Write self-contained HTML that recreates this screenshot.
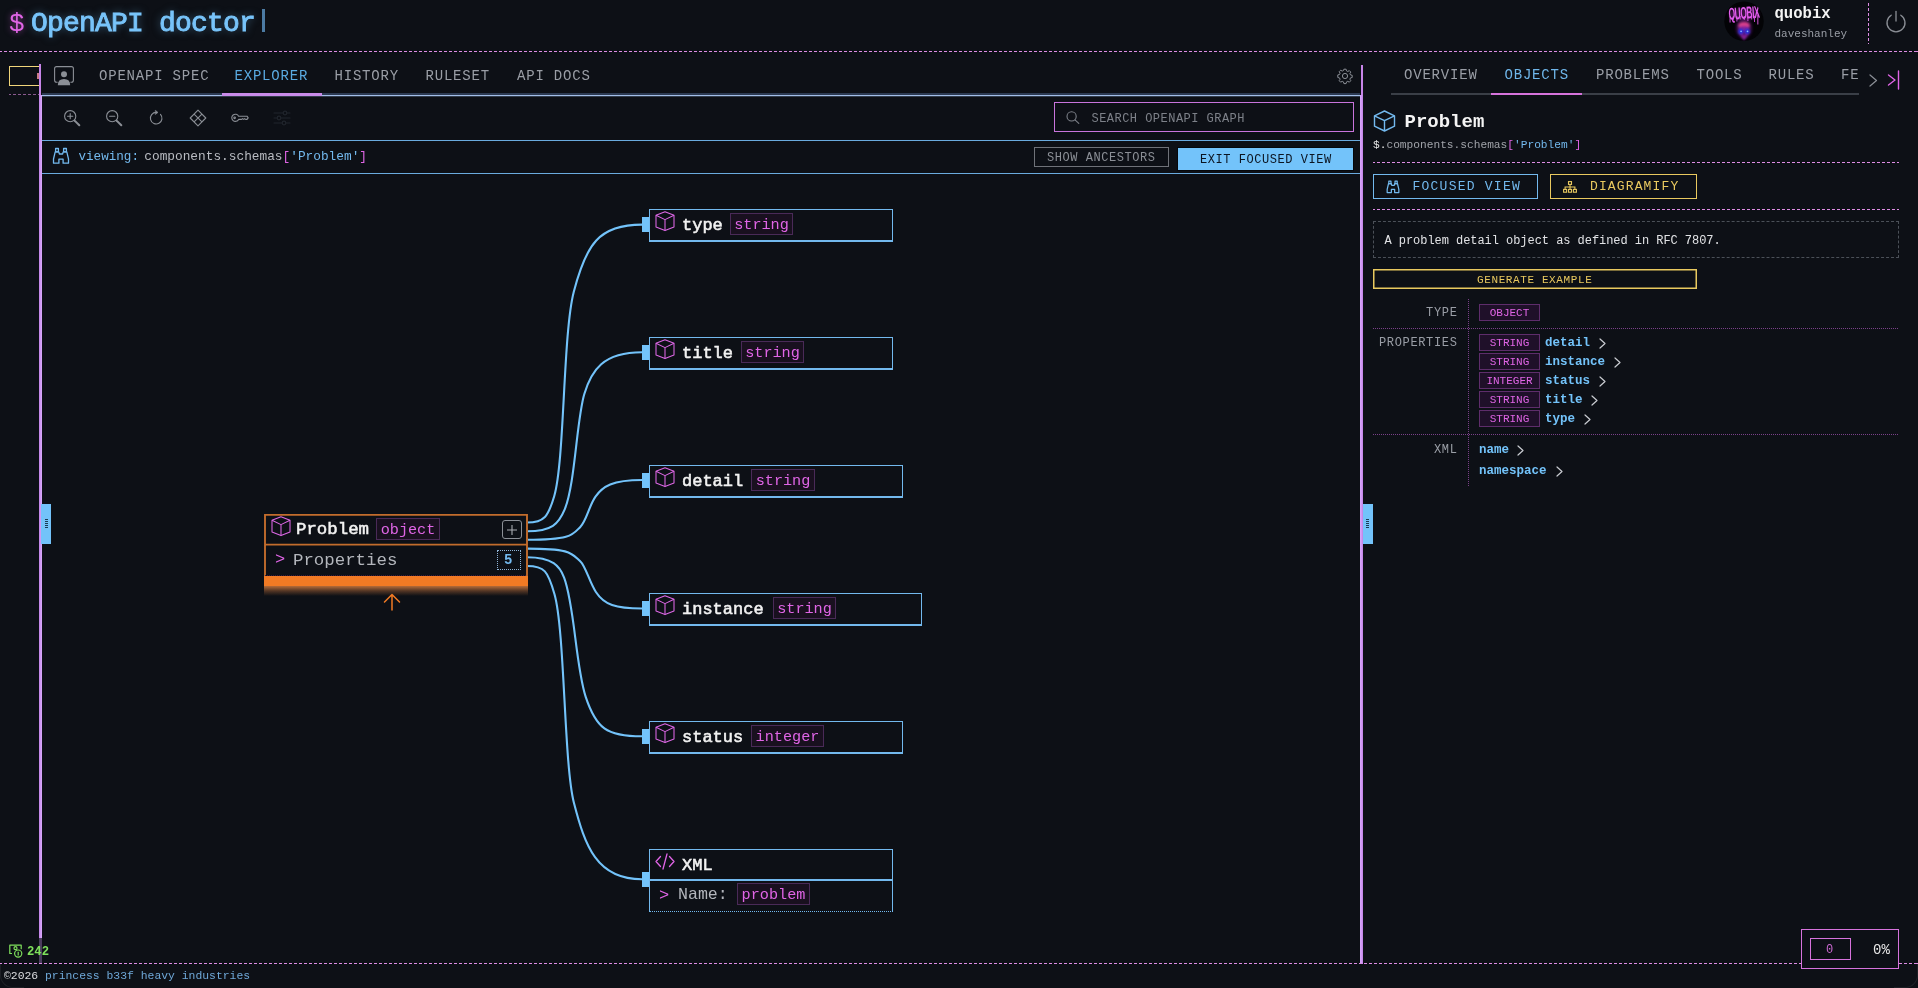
<!DOCTYPE html>
<html>
<head>
<meta charset="utf-8">
<title>OpenAPI doctor</title>
<style>
html,body{margin:0;padding:0;}
body{width:1918px;height:988px;overflow:hidden;background:#0d1016;font-family:"Liberation Mono",monospace;color:#e6e6e6;position:relative;}
.a{position:absolute;white-space:pre;line-height:1;}
.b{position:absolute;box-sizing:border-box;}
.hd{position:absolute;height:1px;background:repeating-linear-gradient(90deg,#dd8ce3 0,#dd8ce3 3px,transparent 3px,transparent 5px);background-position:-1px 0;}
.vd{position:absolute;width:1px;background:repeating-linear-gradient(180deg,#dd8ce3 0,#dd8ce3 3px,transparent 3px,transparent 5px);}
.tab{position:absolute;white-space:pre;line-height:1;font-size:14px;letter-spacing:0.8px;color:#9a9ea6;top:69px;}
.pill{position:absolute;box-sizing:border-box;border:1px solid #5e2d6b;background:#1f1029;color:#e065e6;font-size:11px;line-height:16px;height:17px;text-align:center;white-space:pre;}
.pn{position:absolute;white-space:pre;line-height:1;margin-top:.7px;font-size:12.5px;font-weight:bold;color:#73c3fa;}
.lbl{position:absolute;white-space:pre;line-height:1;font-size:12px;letter-spacing:0.65px;margin-top:1px;color:#9a9ea6;text-align:right;}
.node{position:absolute;box-sizing:border-box;border:1px solid #73b9ee;border-bottom-width:2px;background:#0d1016;}
.nl{position:absolute;white-space:pre;line-height:1;font-size:17px;font-weight:normal;-webkit-text-stroke:.55px #f2f2f2;color:#f2f2f2;}
.np{position:absolute;box-sizing:border-box;border:1px solid #4a2a58;background:#19101f;color:#e065e6;font-size:15.2px;line-height:20px;height:22px;padding-top:1px;white-space:pre;text-align:center;}
.hn{position:absolute;width:7px;height:15px;background:#73c3fa;}
svg{position:absolute;overflow:visible;}
</style>
</head>
<body>
<div id="root" style="position:absolute;left:0;top:0;width:1918px;height:988px;will-change:transform;transform:translateZ(0);">

<!-- ===== HEADER ===== -->
<div class="a" style="left:9px;top:11px;font-size:26px;color:#e065e6;text-shadow:0 0 6px rgba(224,101,230,.5);">$</div>
<div class="a" id="title" style="left:31px;top:10px;font-size:28px;font-weight:normal;-webkit-text-stroke:.9px #78c4fa;letter-spacing:-0.8px;color:#78c4fa;text-shadow:0 0 8px rgba(115,195,250,.5);">OpenAPI doctor</div>
<div class="b" style="left:262px;top:9px;width:3px;height:23px;background:#4c7ba3;"></div>

<!-- avatar -->
<svg style="left:1724px;top:1px;" width="40" height="41" viewBox="0 0 40 41">
  <defs>
    <filter id="b1" x="-30%" y="-30%" width="160%" height="160%"><feGaussianBlur stdDeviation="0.45"/></filter>
    <filter id="b2" x="-50%" y="-50%" width="200%" height="200%"><feGaussianBlur stdDeviation="1.6"/></filter>
    <filter id="b3" x="-50%" y="-50%" width="200%" height="200%"><feGaussianBlur stdDeviation="0.8"/></filter>
    <clipPath id="cc"><circle cx="20" cy="20.300" r="19.700"/></clipPath>
  </defs>
  <circle cx="20" cy="20.300" r="19.700" fill="#030306"/>
  <g clip-path="url(#cc)">
    <ellipse cx="20" cy="27" rx="8" ry="10" fill="#7a1f8e" opacity=".5" filter="url(#b2)"/>
    <ellipse cx="20" cy="13" rx="15" ry="6" fill="#a030b0" opacity=".35" filter="url(#b2)"/>
    <g filter="url(#b1)" fill="#e45cee">
      <g transform="translate(20.300,17.800) rotate(-4) scale(.8,1.620)"><text x="0" y="0" text-anchor="middle" font-family="Liberation Sans, sans-serif" font-weight="bold" font-size="10.500" letter-spacing="-.5">QUOBIX</text></g>
      <rect x="5.600" y="15" width=".9" height="6.500"/><rect x="8.800" y="15" width=".8" height="4"/><rect x="12.500" y="15" width=".8" height="5.500"/><rect x="15.800" y="15" width=".8" height="3.500"/><rect x="19.800" y="15" width=".8" height="4"/><rect x="23.500" y="15" width=".8" height="5"/><rect x="27.300" y="15" width=".8" height="3.500"/><rect x="30.200" y="15" width=".8" height="6"/><rect x="33.400" y="14" width=".9" height="9.500"/>
    </g>
    <g filter="url(#b3)">
      <ellipse cx="20" cy="24.500" rx="5.800" ry="3.600" fill="#d8408c"/>
      <path d="M14.600 26Q20 24 25.400 26L24.600 32 22.300 36.500 20 39.500 17.700 36.500 15.400 32z" fill="#86249a"/>
      <path d="M18.600 33L20 30 21.400 33 20 35z" fill="#3a0a4a"/>
    </g>
    <circle cx="16.900" cy="30.400" r="2.600" fill="#1a2fe0" filter="url(#b3)"/>
    <circle cx="23.300" cy="30.400" r="2.600" fill="#1a2fe0" filter="url(#b3)"/>
    <circle cx="17.100" cy="30.300" r=".9" fill="#8fb0ff" filter="url(#b1)"/>
    <circle cx="23.500" cy="30.300" r=".9" fill="#8fb0ff" filter="url(#b1)"/>
  </g>
</svg>
<div class="a" style="left:1774.500px;top:7px;font-size:15.6px;font-weight:bold;color:#f4f4f4;">quobix</div>
<div class="a" style="left:1774.500px;top:29px;font-size:11px;color:#9a9ea6;">daveshanley</div>
<div class="vd" style="left:1868px;top:3px;height:41px;"></div>
<svg style="left:1885px;top:10px;" width="22" height="24" viewBox="0 0 22 24" fill="none" stroke="#8b8f96" stroke-width="1.300" stroke-linecap="round">
  <path d="M11 1.5 V11"/>
  <path d="M6.2 5.2 A9 9 0 1 0 15.8 5.2"/>
</svg>

<!-- top dashed line -->
<div class="hd" style="left:0;top:51px;width:1918px;"></div>

<!-- ===== LEFT RAIL ===== -->
<div class="b" style="left:9px;top:66px;width:31px;height:20px;border:1px solid #f0d57a;"></div>
<div class="b" style="left:37px;top:73px;width:2px;height:6px;background:#c97a86;"></div>
<div class="hd" style="left:9px;top:94px;width:31px;opacity:.6;"></div>

<!-- vertical splitters -->
<div class="b" style="left:39px;top:64px;width:2px;height:31px;background:#c785e8;"></div>
<div class="b" style="left:39px;top:95px;width:3px;height:843px;background:linear-gradient(90deg,#c080e4 0,#cf98f4 1.500px,#d9abfa 3px);"></div>
<div class="b" style="left:39px;top:938px;width:3px;height:25px;background:#4b3c5e;"></div>
<div class="b" style="left:41px;top:504px;width:10px;height:40px;background:#73c3fa;"></div>
<div class="b" style="left:45px;top:519px;width:3px;height:9px;background:repeating-linear-gradient(180deg,#0b2438 0,#0b2438 1px,transparent 1px,transparent 2px);opacity:.85;"></div>
<div class="b" style="left:1361px;top:65px;width:2px;height:30px;background:#c785e8;"></div>
<div class="b" style="left:1360px;top:95px;width:3px;height:869px;background:linear-gradient(90deg,#d9abfa 0,#cf98f4 1.500px,#c080e4 3px);"></div>
<div class="b" style="left:1363px;top:504px;width:10px;height:40px;background:#73c3fa;"></div>
<div class="b" style="left:1366px;top:519px;width:3px;height:9px;background:repeating-linear-gradient(180deg,#0b2438 0,#0b2438 1px,transparent 1px,transparent 2px);opacity:.85;"></div>

<!-- ===== LEFT TABS ===== -->
<div class="tab" style="left:99px;">OPENAPI SPEC</div>
<div class="tab" style="left:234.5px;color:#5aaae1;">EXPLORER</div>
<div class="tab" style="left:334.5px;">HISTORY</div>
<div class="tab" style="left:425.5px;">RULESET</div>
<div class="tab" style="left:517px;">API DOCS</div>
<div class="b" style="left:42px;top:93px;width:1318px;height:2px;background:#2c3a52;"></div>
<div class="b" style="left:42px;top:95px;width:1318px;height:2px;background:linear-gradient(180deg,#a3bfe8 0,#a3bfe8 1px,rgba(163,191,232,.25) 1px);"></div>
<div class="b" style="left:222px;top:93px;width:100px;height:3px;background:#c98be9;"></div>
<svg style="left:54px;top:66px;" width="20" height="20" viewBox="0 0 20 20" fill="none" stroke="#8b8f96" stroke-width="1.100"><path d="M3.600 16.300H2.600Q.6 16.300 .6 14.300V2.600Q.6 .6 2.600 .6H17.400Q19.400 .6 19.400 2.600V14.300Q19.400 16.300 17.400 16.300H16.400"/><circle cx="10" cy="8.200" r="3" fill="#8b8f96" stroke="none"/><path d="M3.800 19.200Q3.800 13 10 13T16.200 19.200z" fill="#8b8f96" stroke="none"/></svg>

<!-- ===== LEFT PANEL: toolbar ===== -->
<div class="b" style="left:42px;top:140px;width:1318px;height:1px;background:#6aabdf;"></div>
<div class="b" style="left:42px;top:173px;width:1318px;height:1px;background:#6aabdf;"></div>

<!-- gear -->
<svg style="left:1337px;top:68px;" width="16" height="16" viewBox="0 0 16 16" fill="none" stroke="#8b8f96" stroke-width="1">
  <circle cx="8" cy="8" r="2.6"/>
  <path d="M6.9 1.2h2.2l.4 1.7 1.3.6 1.5-.9 1.5 1.5-.9 1.5.6 1.3 1.7.4v2.2l-1.7.4-.6 1.3.9 1.5-1.5 1.5-1.5-.9-1.3.6-.4 1.7H6.900l-.4-1.700-1.300-.6-1.500.9-1.500-1.500.9-1.500-.6-1.300-1.700-.4V6.900l1.700-.4.6-1.300-.9-1.500 1.500-1.500 1.500.9 1.300-.6z" stroke-linejoin="round"/>
</svg>

<!-- zoom in -->
<svg style="left:63px;top:109px;" width="18" height="18" viewBox="0 0 18 18" fill="none" stroke="#8b8f96" stroke-width="1.1" stroke-linecap="round">
  <circle cx="7.2" cy="7.2" r="5.6"/><path d="M4.600 7.200h5.200M7.200 4.600v5.200"/><path d="M11.600 11.600L16.300 16.300" stroke-width="2"/>
</svg>
<!-- zoom out -->
<svg style="left:105px;top:109px;" width="18" height="18" viewBox="0 0 18 18" fill="none" stroke="#8b8f96" stroke-width="1.1" stroke-linecap="round">
  <circle cx="7.2" cy="7.2" r="5.6"/><path d="M4.600 7.200h5.200"/><path d="M11.600 11.600L16.300 16.300" stroke-width="2"/>
</svg>
<!-- rotate -->
<svg style="left:149px;top:110px;" width="15" height="16" viewBox="0 0 15 16" fill="none" stroke="#8b8f96" stroke-width="1.100" stroke-linecap="round" stroke-linejoin="round">
  <path d="M11.500 4.300A5.800 5.800 0 1 1 7.200 2.400"/><path d="M6.600 .5L9 2.400 6.600 4.300z" fill="#8b8f96" stroke-width=".6"/>
</svg>
<!-- diamond grid -->
<svg style="left:189px;top:109px;" width="18" height="18" viewBox="0 0 18 18" fill="none" stroke="#8b8f96" stroke-width="1.1" stroke-linejoin="round">
  <path d="M9 1.200L16.800 9 9 16.800 1.200 9z"/><path d="M5.100 5.100l7.800 7.800M12.900 5.100l-7.800 7.800"/>
</svg>
<!-- key -->
<svg style="left:231px;top:112px;" width="18" height="12" viewBox="0 0 18 12" fill="none" stroke="#8b8f96" stroke-width="1.1" stroke-linecap="round" stroke-linejoin="round">
  <path d="M7.600 4.200H16l1.200 1.600L16 7.400h-1.400l-1-.8-1 .8-1-.8-1 .8H7.600A3.600 3.600 0 1 1 7.600 4.200z"/><circle cx="3.600" cy="5.800" r=".8"/>
</svg>
<!-- sliders (dim) -->
<svg style="left:273px;top:110px;" width="18" height="16" viewBox="0 0 18 16" fill="none" stroke="#20252c" stroke-width="1.2" stroke-linecap="round">
  <path d="M1 3h16M1 8h16M1 13h16"/><circle cx="12" cy="3" r="1.800" fill="#0d1016"/><circle cx="6" cy="8" r="1.800" fill="#0d1016"/><circle cx="11" cy="13" r="1.800" fill="#0d1016"/>
</svg>

<!-- search box -->
<div class="b" style="left:1054px;top:102px;width:300px;height:30px;border:1px solid #c874dc;"></div>
<svg style="left:1066px;top:111px;" width="14" height="13" viewBox="0 0 14 13" fill="none" stroke="#7d8189" stroke-width="1.1" stroke-linecap="round">
  <circle cx="5.600" cy="5.400" r="4.600"/><path d="M9 8.800L12.800 12.300"/>
</svg>
<div class="a" style="left:1091.5px;top:113px;font-size:12px;letter-spacing:0.47px;color:#7d8189;">SEARCH OPENAPI GRAPH</div>

<!-- viewing row -->
<svg style="left:52px;top:147px;" width="18" height="18" viewBox="0 0 18 18" fill="none" stroke="#73b9ee" stroke-width="1.300" stroke-linejoin="round">
  <path d="M3.600 1.500h2.800v3.300H3.600z"/><path d="M11.600 1.500h2.800v3.300h-2.800z"/>
  <path d="M3.200 4.800h3.600l.6 2.200h3.200l.6-2.200h3.600l1.700 7.200v4.200h-5.400v-4h-4.200v4H1.500v-4.200z"/>
</svg>
<div class="a" style="left:78.500px;top:151px;font-size:12.600px;color:#73b9ee;">viewing:</div>
<div class="a" style="left:144.300px;top:151px;font-size:12.800px;color:#b9bcc2;">components.schemas<span style="color:#e065e6">[</span><span style="color:#73b9ee">'Problem'</span><span style="color:#e065e6">]</span></div>

<!-- buttons -->
<div class="b" style="left:1034px;top:147px;width:135px;height:20px;border:1px solid #6f7279;"></div>
<div class="a" style="left:1047px;top:152px;font-size:12px;letter-spacing:0.550px;color:#8b8f96;">SHOW ANCESTORS</div>
<div class="b" style="left:1178px;top:148px;width:175px;height:22px;background:#73c3fa;box-shadow:0 0 0 1px #05080c;"></div>
<div class="a" style="left:1200px;top:154px;font-size:12px;letter-spacing:0.550px;color:#0b1420;">EXIT FOCUSED VIEW</div>


<!-- ===== GRAPH ===== -->
<svg style="left:0;top:0;" width="1360" height="964" viewBox="0 0 1360 964" fill="none" stroke="#73c3fa" stroke-width="2.100">
<path d="M527.0 522.5C544.4 522.5 548.2 516.5 554.2 496.2C564.8 460.4 562.8 333.7 573.8 291.7C586.2 244.4 598.6 224.6 642.0 224.6"/>
<path d="M527.0 531.2C551.9 531.2 558.6 524.0 564.7 509.3C575.2 484.1 576.6 418.8 584.4 393.7C591.6 370.5 602.8 352.3 642.0 352.3"/>
<path d="M527.0 539.8C573.2 539.8 573.0 534.0 580.3 526.9C586.6 520.8 588.8 506.3 595.5 496.7C602.5 486.6 612.2 480.0 642.0 480.0"/>
<path d="M527.0 548.6C571.5 548.6 571.6 553.4 580.2 561.2C585.7 566.1 589.3 581.9 595.9 592.0C604.2 604.8 615.4 608.5 642.0 608.5"/>
<path d="M527.0 557.2C552.8 557.2 559.9 566.3 564.1 577.6C574.6 605.2 575.6 665.9 585.7 696.8C596.1 728.2 606.4 736.3 642.0 736.3"/>
<path d="M527.0 566.0C544.5 566.0 547.9 570.9 554.5 594.2C564.9 630.6 563.9 764.1 573.9 802.7C585.0 845.7 596.5 879.2 642.0 879.2"/>
</svg>
<div class="node" style="left:649px;top:209px;width:244px;height:33px;"></div>
<div class="hn" style="left:642px;top:217px;"></div>
<svg style="left:655px;top:211px;" width="20" height="20" viewBox="0 0 20 20" fill="none" stroke="#de68e6" stroke-width="1.050" stroke-linejoin="round"><path d="M10 .8L19 4.300V16.100L10 19.600 1 16.100V4.300z"/><path d="M1 4.300L10 8.600 19 4.300M10 8.600V19.600"/></svg>
<div class="nl" style="left:682px;top:217px;">type</div>
<div class="np" style="left:730px;top:213px;width:63px;">string</div>
<div class="node" style="left:649px;top:337px;width:244px;height:33px;"></div>
<div class="hn" style="left:642px;top:345px;"></div>
<svg style="left:655px;top:339px;" width="20" height="20" viewBox="0 0 20 20" fill="none" stroke="#de68e6" stroke-width="1.050" stroke-linejoin="round"><path d="M10 .8L19 4.300V16.100L10 19.600 1 16.100V4.300z"/><path d="M1 4.300L10 8.600 19 4.300M10 8.600V19.600"/></svg>
<div class="nl" style="left:682px;top:345px;">title</div>
<div class="np" style="left:741px;top:341px;width:63px;">string</div>
<div class="node" style="left:649px;top:465px;width:254px;height:33px;"></div>
<div class="hn" style="left:642px;top:473px;"></div>
<svg style="left:655px;top:467px;" width="20" height="20" viewBox="0 0 20 20" fill="none" stroke="#de68e6" stroke-width="1.050" stroke-linejoin="round"><path d="M10 .8L19 4.300V16.100L10 19.600 1 16.100V4.300z"/><path d="M1 4.300L10 8.600 19 4.300M10 8.600V19.600"/></svg>
<div class="nl" style="left:682px;top:473px;">detail</div>
<div class="np" style="left:751px;top:469px;width:64px;">string</div>
<div class="node" style="left:649px;top:593px;width:273px;height:33px;"></div>
<div class="hn" style="left:642px;top:601px;"></div>
<svg style="left:655px;top:595px;" width="20" height="20" viewBox="0 0 20 20" fill="none" stroke="#de68e6" stroke-width="1.050" stroke-linejoin="round"><path d="M10 .8L19 4.300V16.100L10 19.600 1 16.100V4.300z"/><path d="M1 4.300L10 8.600 19 4.300M10 8.600V19.600"/></svg>
<div class="nl" style="left:682px;top:601px;">instance</div>
<div class="np" style="left:773px;top:597px;width:63px;">string</div>
<div class="node" style="left:649px;top:721px;width:254px;height:33px;"></div>
<div class="hn" style="left:642px;top:729px;"></div>
<svg style="left:655px;top:723px;" width="20" height="20" viewBox="0 0 20 20" fill="none" stroke="#de68e6" stroke-width="1.050" stroke-linejoin="round"><path d="M10 .8L19 4.300V16.100L10 19.600 1 16.100V4.300z"/><path d="M1 4.300L10 8.600 19 4.300M10 8.600V19.600"/></svg>
<div class="nl" style="left:682px;top:729px;">status</div>
<div class="np" style="left:751px;top:725px;width:73px;">integer</div>
<div class="node" style="left:649px;top:849px;width:244px;height:63px;border-bottom:1px dotted #73b9ee;"></div>
<div class="b" style="left:649px;top:879px;width:244px;height:2px;background:#73b9ee;"></div>
<div class="hn" style="left:642px;top:872px;"></div>
<svg style="left:655px;top:853px;" width="20" height="17" viewBox="0 0 20 17" fill="none" stroke="#e065e6" stroke-width="1.300" stroke-linecap="round" stroke-linejoin="round"><path d="M5.500 3.500L1 8.500 5.500 13.500M14.500 3.500L19 8.500 14.500 13.500M12 1L8 16"/></svg>
<div class="nl" style="left:682px;top:857px;">XML</div>
<div class="a" style="left:659px;top:887px;font-size:17px;color:#e065e6;">&gt;</div>
<div class="a" style="left:678px;top:887px;font-size:16.600px;color:#b3b6bc;">Name:</div>
<div class="np" style="left:737px;top:883px;width:73px;">problem</div>
<div class="b" style="left:264px;top:514px;width:264px;height:62px;background:#0d1016;"></div>
<svg style="left:0;top:0;" width="600" height="620" viewBox="0 0 600 620" fill="none" stroke="#c26c2c" stroke-width="1.900"><path d="M265 576V514.900H527V576M265 544.600H527"/></svg>
<div class="b" style="left:265px;top:575px;width:262px;height:1px;background:repeating-linear-gradient(90deg,#3a1c3e 0,#3a1c3e 1px,transparent 1px,transparent 2px);"></div>
<div class="b" style="left:264px;top:576px;width:264px;height:10px;background:#f17a24;"></div>
<div class="b" style="left:264px;top:586px;width:264px;height:10px;background:linear-gradient(180deg,rgba(190,112,58,.95),rgba(150,90,50,.5) 50%,rgba(13,17,23,0));"></div>
<svg style="left:271px;top:516px;" width="20" height="20" viewBox="0 0 20 20" fill="none" stroke="#de68e6" stroke-width="1.050" stroke-linejoin="round"><path d="M10 .8L19 4.300V16.100L10 19.600 1 16.100V4.300z"/><path d="M1 4.300L10 8.600 19 4.300M10 8.600V19.600"/></svg>
<div class="nl" style="left:296px;top:521px;font-size:17.400px;">Problem</div>
<div class="np" style="left:376px;top:518px;width:64px;">object</div>
<div class="b" style="left:502px;top:520px;width:20px;height:19px;border:1px solid #8b8f96;border-radius:3px;"></div>
<svg style="left:506px;top:524px;" width="12" height="12" viewBox="0 0 12 12" fill="none" stroke="#a9acb2" stroke-width="1.100"><path d="M6 1v10M1 6h10"/></svg>
<div class="a" style="left:275px;top:551px;font-size:17px;color:#e065e6;">&gt;</div>
<div class="a" style="left:293px;top:551.500px;font-size:17.400px;color:#b3b6bc;">Properties</div>
<div class="b" style="left:497px;top:550px;width:24px;height:20px;border:1px dotted #8fb4d6;"></div>
<div class="a" style="left:504px;top:553px;font-size:14px;font-weight:bold;color:#73b9ee;">5</div>
<svg style="left:383px;top:593px;" width="18" height="18" viewBox="0 0 18 18" fill="none" stroke="#f17a24" stroke-width="1.500" stroke-linecap="round" stroke-linejoin="round"><path d="M9 17V1.500M1.500 9L9 1.500 16.500 9"/></svg>


<!-- ===== RIGHT PANEL ===== -->
<div class="tab" style="left:1404px;top:68px;">OVERVIEW</div>
<div class="tab" style="left:1504.5px;top:68px;color:#6fb6ea;">OBJECTS</div>
<div class="tab" style="left:1596px;top:68px;">PROBLEMS</div>
<div class="tab" style="left:1696.5px;top:68px;">TOOLS</div>
<div class="tab" style="left:1768.5px;top:68px;">RULES</div>
<div class="tab" style="left:1841px;top:68px;">FE</div>
<div class="b" style="left:1391px;top:93px;width:468px;height:2px;background:#3a3f47;"></div>
<div class="b" style="left:1491px;top:93px;width:91px;height:2px;background:#d673dc;"></div>
<svg style="left:1869px;top:74px;" width="9" height="13" viewBox="0 0 9 13" fill="none" stroke="#8b8f96" stroke-width="1.200" stroke-linecap="round" stroke-linejoin="round"><path d="M1 1l6.500 5.500L1 12"/></svg>
<svg style="left:1887px;top:70px;" width="13" height="20" viewBox="0 0 13 20" fill="none" stroke="#e065e6" stroke-width="1.400" stroke-linecap="round" stroke-linejoin="round"><path d="M1.500 5l6.500 5-6.500 5M11.500 1v18"/></svg>
<svg style="left:1373px;top:110px;" width="23" height="22" viewBox="0 0 23 22" fill="none" stroke="#73b9ee" stroke-width="1.400" stroke-linejoin="round"><path d="M11.500 1L21.500 5.800V16.200L11.500 21 1.500 16.200V5.800z"/><path d="M1.500 5.800L11.500 10.600 21.500 5.800M11.500 10.600V21"/></svg>
<div class="a" style="left:1404.500px;top:113px;font-size:19px;font-weight:bold;color:#f4f4f4;">Problem</div>
<div class="a" style="left:1373px;top:139.500px;font-size:11.200px;color:#a0a3a9;"><span style="color:#e8e8e8">$.</span>components.schemas<span style="color:#e065e6">[</span><span style="color:#73b9ee">'Problem'</span><span style="color:#e065e6">]</span></div>
<div class="hd" style="left:1373px;top:162px;width:526px;"></div>
<div class="b" style="left:1373px;top:174px;width:165px;height:25px;border:1px solid #73b9ee;"></div>
<svg style="left:1386px;top:180px;" width="14" height="14" viewBox="0 0 18 18" fill="none" stroke="#73b9ee" stroke-width="1.600" stroke-linejoin="round">
  <path d="M3.600 1.500h2.800v3.300H3.600z"/><path d="M11.600 1.500h2.800v3.300h-2.800z"/>
  <path d="M3.200 4.800h3.600l.6 2.200h3.200l.6-2.200h3.600l1.700 7.200v4.200h-5.400v-4h-4.200v4H1.500v-4.200z"/>
</svg>
<div class="a" style="left:1412.500px;top:180px;font-size:13px;letter-spacing:1.240px;color:#73b9ee;">FOCUSED VIEW</div>
<div class="b" style="left:1550px;top:174px;width:147px;height:25px;border:1px solid #e9c95f;"></div>
<svg style="left:1563px;top:181px;" width="14" height="12" viewBox="0 0 14 12" fill="none" stroke="#e9c95f" stroke-width="1.100"><rect x="5.500" y=".6" width="3" height="2.800"/><rect x=".6" y="8.400" width="3" height="2.800"/><rect x="5.500" y="8.400" width="3" height="2.800"/><rect x="10.400" y="8.400" width="3" height="2.800"/><path d="M7 3.400v5M2.100 8.400V6h9.800v2.400"/></svg>
<div class="a" style="left:1590px;top:180px;font-size:13px;letter-spacing:1.130px;color:#e9c95f;">DIAGRAMIFY</div>
<div class="hd" style="left:1373px;top:209px;width:526px;"></div>
<div class="b" style="left:1373px;top:221px;width:526px;height:37px;border:1px dashed #4b5058;"></div>
<div class="a" style="left:1384.500px;top:234.600px;font-size:12px;letter-spacing:-0.050px;color:#e2e3e6;">A problem detail object as defined in RFC 7807.</div>
<div class="b" style="left:1373px;top:269px;width:324px;height:20px;border:1px solid #e9c95f;box-shadow:inset 0 0 0 .500px #e9c95f;"></div>
<div class="a" style="left:1477px;top:274.600px;font-size:11px;letter-spacing:0.610px;color:#e9c95f;">GENERATE EXAMPLE</div>
<div class="b" style="left:1468px;top:299px;width:1px;height:188px;background:repeating-linear-gradient(180deg,#7a4088 0,#7a4088 1px,transparent 1px,transparent 2px);"></div>
<div class="b" style="left:1373px;top:328px;width:526px;height:1px;background:repeating-linear-gradient(90deg,#7a4088 0,#7a4088 1px,transparent 1px,transparent 2px);"></div>
<div class="b" style="left:1373px;top:434px;width:526px;height:1px;background:repeating-linear-gradient(90deg,#7a4088 0,#7a4088 1px,transparent 1px,transparent 2px);"></div>
<div class="lbl" style="left:1373px;width:84.500px;top:306px;">TYPE</div>
<div class="lbl" style="left:1373px;width:84.500px;top:336px;">PROPERTIES</div>
<div class="lbl" style="left:1373px;width:84.500px;top:443px;">XML</div>
<div class="pill" style="left:1479px;top:304px;width:61px;">OBJECT</div>
<div class="pill" style="left:1479px;top:334px;width:61px;">STRING</div>
<div class="pn" style="left:1545px;top:336px;">detail</div>
<svg style="left:1598.5px;top:338px;" width="7" height="11" viewBox="0 0 7 11" fill="none" stroke="#c9ccd1" stroke-width="1.200" stroke-linecap="round" stroke-linejoin="round"><path d="M1 1l5 4.500-5 4.500"/></svg>
<div class="pill" style="left:1479px;top:353px;width:61px;">STRING</div>
<div class="pn" style="left:1545px;top:355px;">instance</div>
<svg style="left:1613.5px;top:357px;" width="7" height="11" viewBox="0 0 7 11" fill="none" stroke="#c9ccd1" stroke-width="1.200" stroke-linecap="round" stroke-linejoin="round"><path d="M1 1l5 4.500-5 4.500"/></svg>
<div class="pill" style="left:1479px;top:372px;width:61px;">INTEGER</div>
<div class="pn" style="left:1545px;top:374px;">status</div>
<svg style="left:1598.5px;top:376px;" width="7" height="11" viewBox="0 0 7 11" fill="none" stroke="#c9ccd1" stroke-width="1.200" stroke-linecap="round" stroke-linejoin="round"><path d="M1 1l5 4.500-5 4.500"/></svg>
<div class="pill" style="left:1479px;top:391px;width:61px;">STRING</div>
<div class="pn" style="left:1545px;top:393px;">title</div>
<svg style="left:1591.0px;top:395px;" width="7" height="11" viewBox="0 0 7 11" fill="none" stroke="#c9ccd1" stroke-width="1.200" stroke-linecap="round" stroke-linejoin="round"><path d="M1 1l5 4.500-5 4.500"/></svg>
<div class="pill" style="left:1479px;top:410px;width:61px;">STRING</div>
<div class="pn" style="left:1545px;top:412px;">type</div>
<svg style="left:1583.5px;top:414px;" width="7" height="11" viewBox="0 0 7 11" fill="none" stroke="#c9ccd1" stroke-width="1.200" stroke-linecap="round" stroke-linejoin="round"><path d="M1 1l5 4.500-5 4.500"/></svg>
<div class="pn" style="left:1479px;top:443px;">name</div>
<svg style="left:1517px;top:445px;" width="7" height="11" viewBox="0 0 7 11" fill="none" stroke="#c9ccd1" stroke-width="1.200" stroke-linecap="round" stroke-linejoin="round"><path d="M1 1l5 4.500-5 4.500"/></svg>
<div class="pn" style="left:1479px;top:464px;">namespace</div>
<svg style="left:1555.5px;top:466px;" width="7" height="11" viewBox="0 0 7 11" fill="none" stroke="#c9ccd1" stroke-width="1.200" stroke-linecap="round" stroke-linejoin="round"><path d="M1 1l5 4.500-5 4.500"/></svg>


<!-- ===== FOOTER ===== -->
<div class="hd" style="left:0;top:963px;width:1918px;"></div>
<svg style="left:9px;top:944px;" width="14" height="14" viewBox="0 0 14 14" fill="none" stroke="#7fe05c" stroke-width="1.200" stroke-linejoin="round"><path d="M3 9.500H.8V1.200h11.400v4"/><circle cx="6.500" cy="4.200" r="1.500"/><circle cx="9.200" cy="9.600" r="3.600"/><path d="M9.200 7.800v3.600"/></svg>
<div class="a" style="left:27px;top:945.500px;font-size:12.200px;font-weight:bold;color:#7fe05c;">242</div>
<div class="a" style="left:4px;top:971px;font-size:11.400px;color:#dcdde0;">©2026 <span style="color:#6fa8d8">princess b33f heavy industries</span></div>
<div class="b" style="left:0;top:964px;width:24px;height:24px;border-radius:0 0 0 13px;border-left:1px solid rgba(255,255,255,.07);border-bottom:1px solid rgba(255,255,255,.07);"></div>
<div class="b" style="left:1894px;top:964px;width:24px;height:24px;border-radius:0 0 13px 0;border-right:1px solid rgba(255,255,255,.07);border-bottom:1px solid rgba(255,255,255,.07);"></div>
<div class="b" style="left:1801px;top:929px;width:98px;height:40px;border:1px solid #d673dc;background:#0d1016;"></div>
<div class="b" style="left:1810px;top:938px;width:41px;height:22px;border:1px solid #d673dc;"></div>
<div class="a" style="left:1826px;top:944px;font-size:12px;color:#c968cf;">0</div>
<div class="a" style="left:1873px;top:943px;font-size:14px;color:#e8e8e8;">0%</div>


</div>
</body>
</html>
